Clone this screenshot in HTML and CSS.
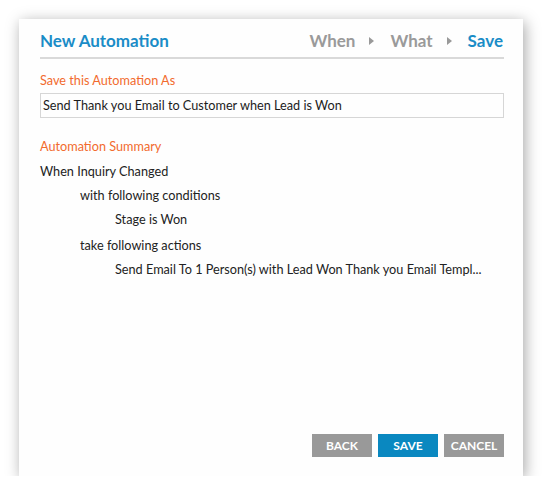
FILE: index.html
```html
<!DOCTYPE html>
<html>
<head>
<meta charset="utf-8">
<link rel="stylesheet" href="styles.css">
</head>
<body>
<div class="dialog">
  <div class="header">
    <div class="title">New Automation</div>
    <div class="steps">
      <span class="step">When</span>
      <span class="arrow"></span>
      <span class="step">What</span>
      <span class="arrow"></span>
      <span class="step active">Save</span>
    </div>
  </div>
  <div class="label">Save this Automation As</div>
  <div class="input">Send Thank you Email to Customer when Lead is Won</div>
  <div class="label summary-label">Automation Summary</div>
  <div class="summary">
    <div class="line l0">When Inquiry Changed</div>
    <div class="line l1">with following conditions</div>
    <div class="line l2">Stage is Won</div>
    <div class="line l1 gap">take following actions</div>
    <div class="line l2">Send Email To 1 Person(s) with Lead Won Thank you Email Templ...</div>
  </div>
  <div class="buttons">
    <div class="btn gray">BACK</div>
    <div class="btn blue">SAVE</div>
    <div class="btn gray">CANCEL</div>
  </div>
</div>
</body>
</html>
```
FILE: styles.css
```css
html, body {
  margin: 0;
  padding: 0;
  background: #ffffff;
}
body {
  font-family: "Lato", "Liberation Sans", sans-serif;
  color: #222;
  padding: 19px 0 0 19px;
}
.dialog {
  width: 504px;
  height: 457px;
  box-sizing: border-box;
  padding: 0 19px 0 21px;
  background: #fefefe;
  box-shadow: 2px 3px 14px rgba(0,0,0,0.35);
  display: flex;
  flex-direction: column;
}
.header {
  display: flex;
  justify-content: space-between;
  align-items: center;
  padding-top: 5px;
  box-sizing: border-box;
  border-bottom: 2px solid #d9d9d9;
  height: 40px;
}
.title {
  font-size: 17px;
  font-weight: bold;
  color: #1a8cc7;
}
.steps {
  display: flex;
  align-items: center;
  font-size: 17px;
  font-weight: bold;
  margin-right: 1px;
}
.step { color: #9a9a9a; }
.step.active { color: #1a8cc7; }
.arrow {
  width: 0; height: 0;
  border-left: 5px solid #999;
  border-top: 4px solid transparent;
  border-bottom: 4px solid transparent;
  margin: 0 16px 0 14px;
}
.label {
  color: #f26b2e;
  font-size: 12.7px;
  margin-top: 12px;
  line-height: 18px;
}
.input {
  margin-top: 4px;
  height: 25px;
  box-sizing: border-box;
  border: 1px solid #d6d6d6;
  font-size: 12.7px;
  line-height: 23px;
  padding-left: 2px;
  color: #1c1c1c;
}
.summary-label { margin-top: 19px; }
.summary { font-size: 12.7px; color: #222; margin-top: 4px; }
.line { line-height: 24px; white-space: nowrap; }
.l1 { padding-left: 40px; }
.l2 { padding-left: 75px; }
.gap { margin-top: 2px; }
.buttons {
  margin-top: auto;
  margin-bottom: 19px;
  display: flex;
  justify-content: flex-end;
  gap: 6px;
}
.btn {
  width: 60px;
  height: 23px;
  line-height: 23px;
  text-align: center;
  color: #fff;
  font-size: 12px;
  font-weight: bold;
}
.gray { background: #999999; }
.blue { background: #0a88c0; }
```
